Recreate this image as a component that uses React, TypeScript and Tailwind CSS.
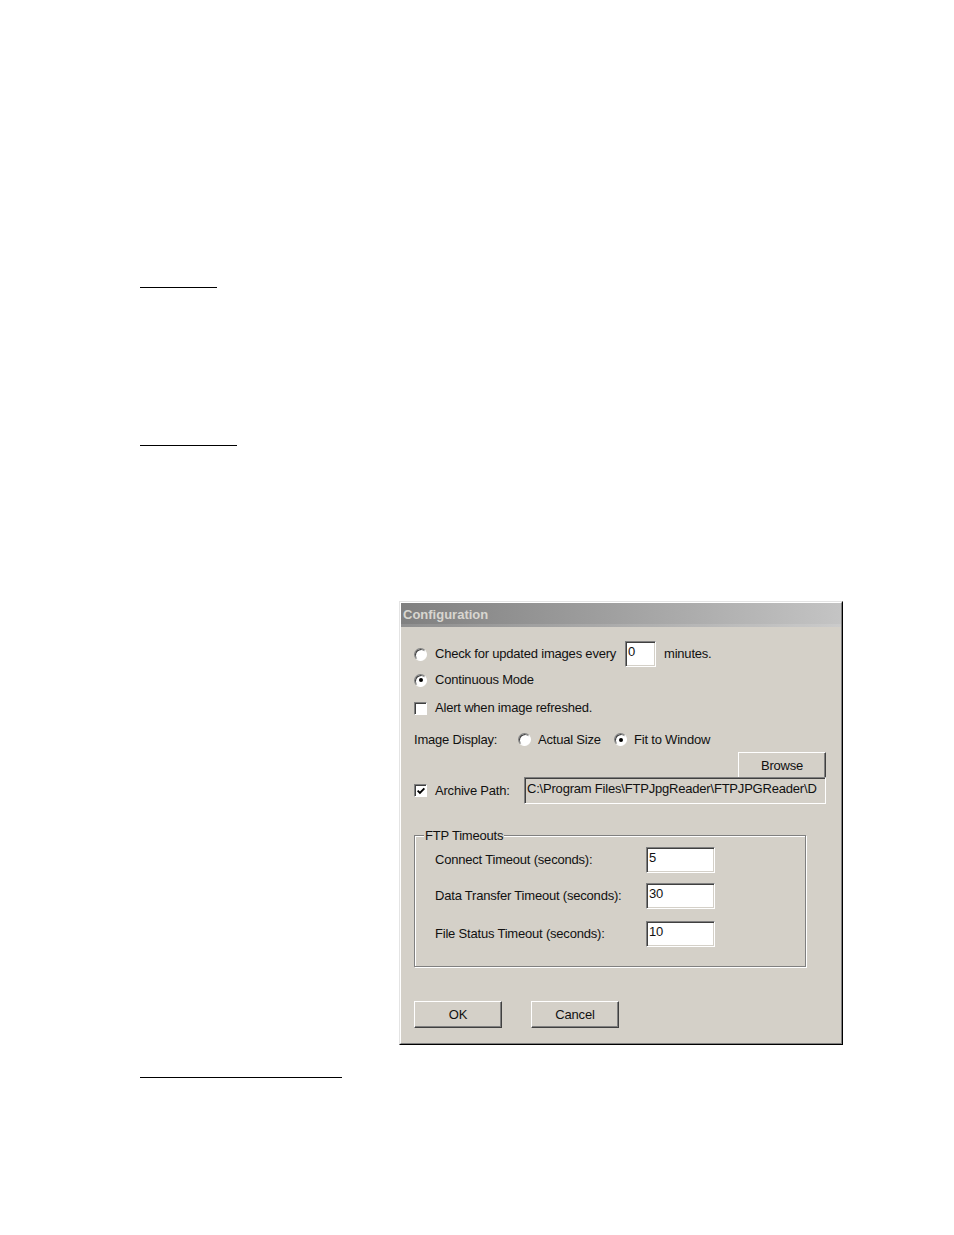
import React from "react";

const font = { fontFamily: '"Liberation Sans", Arial, sans-serif' };

function Radio({ checked }: { checked?: boolean }) {
  return (
    <span className="relative grid size-[13px] shrink-0 place-items-center rounded-full border border-t-[#808080] border-l-[#808080] border-r-white border-b-white bg-white shadow-[inset_1px_1px_0_#404040]">
      {checked && <span className="size-[4px] rounded-full bg-black" />}
    </span>
  );
}

function Checkbox({ checked }: { checked?: boolean }) {
  return (
    <span className="grid size-[13px] shrink-0 place-items-center border border-t-[#808080] border-l-[#808080] border-r-white border-b-white bg-white shadow-[inset_1px_1px_0_#404040]">
      {checked && (
        <svg viewBox="0 0 11 11" className="size-[10px]" aria-hidden="true">
          <path d="M1.8 5.2 L4.3 7.7 L9.2 2.6" fill="none" stroke="#000" strokeWidth="2" />
        </svg>
      )}
    </span>
  );
}

function TextBox({ value, className }: { value: string; className: string }) {
  return (
    <div
      className={`shrink-0 overflow-hidden whitespace-nowrap border border-t-[#808080] border-l-[#808080] border-r-white border-b-white bg-white pl-[2px] pt-[2px] text-[13px] leading-[16px] tracking-[-0.2px] text-[#111] shadow-[inset_1px_1px_0_#404040,inset_-1px_-1px_0_#d4d0c8] ${className}`}
    >
      {value}
    </div>
  );
}

function Button({ label, className }: { label: string; className: string }) {
  return (
    <div
      className={`grid h-[27px] w-[88px] shrink-0 place-items-center border border-t-white border-l-white border-r-[#404040] border-b-[#404040] bg-[#d4d0c8] text-[13px] tracking-[-0.2px] text-[#111] shadow-[inset_-1px_-1px_0_#808080] ${className}`}
    >
      {label}
    </div>
  );
}

function Timeout({ label, value, className }: { label: string; value: string; className?: string }) {
  return (
    <div className={`flex h-[26px] items-center ${className ?? ""}`}>
      <span className="w-[211px] shrink-0">{label}</span>
      <TextBox value={value} className="h-[26px] w-[69px]" />
    </div>
  );
}

export default function App() {
  return (
    <div className="flex min-h-[1235px] w-[954px] flex-col bg-white pt-[287px]" style={font}>
      <div className="ml-[140px] h-px w-[77px] bg-black" />
      <div className="ml-[140px] mt-[157px] h-px w-[97px] bg-black" />

      {/* Configuration dialog */}
      <div className="ml-[399px] mt-[155px] flex h-[444px] w-[444px] flex-col border border-t-[#e4e4e4] border-l-[#e4e4e4] border-r-black border-b-black">
        <div className="flex flex-1 flex-col border border-t-white border-l-white border-r-[#808080] border-b-[#808080] bg-[#d4d0c8]">
          <div className="flex h-[24px] items-center bg-linear-to-r from-[#808080] to-[#c4c4c4] pl-[2px] text-[13px] font-bold text-[#d8d6d0] shadow-[inset_0_-3px_0_rgba(255,255,255,0.12)]">
            Configuration
          </div>

          <div className="flex flex-col pl-[13px] pr-[15px] text-[13px] tracking-[-0.2px] text-[#111]">
            <div className="mt-[14px] flex h-[26px] items-center">
              <Radio />
              <span className="ml-[8px] w-[190px] shrink-0">Check for updated images every</span>
              <TextBox value="0" className="h-[26px] w-[31px]" />
              <span className="ml-[8px]">minutes.</span>
            </div>
            <div className="flex h-[26px] items-center">
              <Radio checked />
              <span className="ml-[8px]">Continuous Mode</span>
            </div>
            <div className="mt-[2px] flex h-[26px] items-center">
              <Checkbox />
              <span className="ml-[8px]">Alert when image refreshed.</span>
            </div>

            <div className="mt-[6px] flex h-[25px] items-center">
              <span className="w-[104px] shrink-0">Image Display:</span>
              <Radio />
              <span className="ml-[7px] w-[76px] shrink-0">Actual Size</span>
              <Radio checked />
              <span className="ml-[7px]">Fit to Window</span>
            </div>

            <div className="flex h-[26px] justify-end">
              <Button label="Browse" className="h-[26px] w-[87px]" />
            </div>

            <div className="-mt-px flex h-[27px] items-center">
              <Checkbox checked />
              <span className="ml-[8px] w-[89px] shrink-0">Archive Path:</span>
              <div className="h-[27px] flex-1 overflow-hidden whitespace-nowrap border border-t-[#808080] border-l-[#808080] border-r-white border-b-white bg-[#d4d0c8] pl-[2px] pt-[3px] leading-[16px] shadow-[inset_1px_1px_0_#404040,inset_-1px_-1px_0_#d4d0c8]">
                C:\Program Files\FTPJpgReader\FTPJPGReader\D
              </div>
            </div>

            {/* FTP Timeouts group */}
            <div className="relative mt-[31px] h-[132px] w-[392px] border border-[#808080] shadow-[inset_1px_1px_0_#ffffff,1px_1px_0_#ffffff]">
              <span className="absolute -top-[8px] left-[9px] bg-[#d4d0c8] px-px leading-[16px]">FTP Timeouts</span>
              <div className="flex flex-col pl-[20px] pt-[11px]">
                <Timeout label="Connect Timeout (seconds):" value="5" />
                <Timeout label="Data Transfer Timeout (seconds):" value="30" className="mt-[10px]" />
                <Timeout label="File Status Timeout (seconds):" value="10" className="mt-[12px]" />
              </div>
            </div>

            <div className="mt-[34px] flex">
              <Button label="OK" className="" />
              <Button label="Cancel" className="ml-[29px]" />
            </div>
          </div>
        </div>
      </div>

      <div className="ml-[140px] mt-[32px] h-px w-[202px] bg-black" />
    </div>
  );
}
